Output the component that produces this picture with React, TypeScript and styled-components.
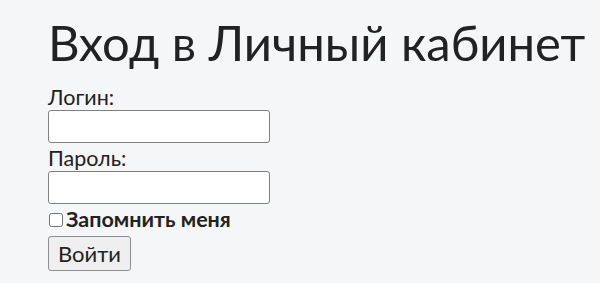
import React from 'react';
import styled, { createGlobalStyle } from 'styled-components';

const GlobalStyle = createGlobalStyle`
  html, body {
    margin: 0;
    padding: 0;
    background: #f5f6f8;
  }
  body {
    font-family: Lato, "Noto Sans", sans-serif;
    color: #222;
  }
`;

const Page = styled.div`
  padding: 10px 48px 0;
`;

const Title = styled.h1`
  margin: 0 0 12px;
  font-size: 49px;
  font-weight: 400;
  line-height: 64px;
  color: #222;
  white-space: nowrap;
`;

const Form = styled.form`
  display: flex;
  flex-direction: column;
  align-items: flex-start;
`;

const Label = styled.label`
  font-size: 21.5px;
  line-height: 23px;
`;

const Input = styled.input`
  box-sizing: border-box;
  width: 222px;
  height: 33px;
  margin: 1px 0 4px;
  padding: 2px 4px;
  border: 1.5px solid #808080;
  border-radius: 3px;
  background: #fff;
  font-size: 18px;
`;

const CheckRow = styled.label`
  display: flex;
  align-items: center;
  gap: 3px;
  font-size: 21.5px;
  font-weight: 700;
  line-height: 23px;
  margin: 0 0 5px;
`;

const Check = styled.input`
  width: 14px;
  height: 14px;
  margin: 0 0 0 1px;
`;

const Button = styled.button`
  box-sizing: border-box;
  height: 35px;
  padding: 0 9px;
  font-family: Lato, "Noto Sans", sans-serif;
  font-size: 22px;
  color: #222;
  background: #efefef;
  border: 1.5px solid #8f8f8f;
  border-radius: 3px;
`;

export default function App() {
  return (
    <Page>
      <GlobalStyle />
      <Title>Вход в Личный кабинет</Title>
      <Form onSubmit={e => e.preventDefault()}>
        <Label htmlFor="login">Логин:</Label>
        <Input id="login" type="text" />
        <Label htmlFor="password">Пароль:</Label>
        <Input id="password" type="password" />
        <CheckRow>
          <Check type="checkbox" />
          Запомнить меня
        </CheckRow>
        <Button type="submit">Войти</Button>
      </Form>
    </Page>
  );
}
